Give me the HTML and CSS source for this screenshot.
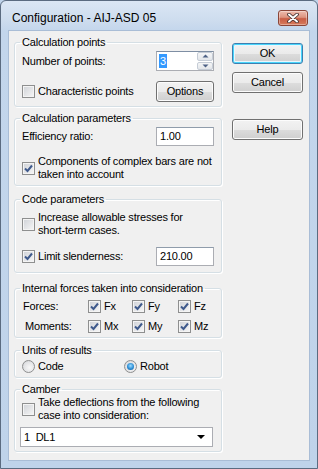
FILE: index.html
```html
<!DOCTYPE html>
<html>
<head>
<meta charset="utf-8">
<link rel="stylesheet" href="styles.css">
</head>
<body>
<div class="window">
  <div class="titlebar">
    <span class="title">Configuration - AIJ-ASD 05</span>
    <div class="close">
      <svg width="14" height="10" viewBox="0 0 14 10"><path d="M3 1.5 L11 8.5 M11 1.5 L3 8.5" stroke="#3b2a2a" stroke-width="3.6" stroke-linecap="round"/><path d="M3 1.5 L11 8.5 M11 1.5 L3 8.5" stroke="#fff" stroke-width="2" stroke-linecap="round"/></svg>
    </div>
  </div>
  <div class="client">
    <div class="left">
      <fieldset class="grp g1">
        <legend>Calculation points</legend>
        <div class="row r20">
          <span class="lbl">Number of points:</span>
          <div class="spin">
            <span class="spin-val"><span class="sel">3</span></span>
            <div class="spin-btns">
              <div class="sb"><svg width="7" height="4" viewBox="0 0 7 4"><path d="M0.5 3.5 L3.5 0.5 L6.5 3.5Z" fill="#4d6185"/></svg></div>
              <div class="sb"><svg width="7" height="4" viewBox="0 0 7 4"><path d="M0.5 0.5 L3.5 3.5 L6.5 0.5Z" fill="#4d6185"/></svg></div>
            </div>
          </div>
        </div>
        <div class="row r21 mt10">
          <span class="cb"></span><span class="cbl">Characteristic points</span>
          <button class="btn opt">Options</button>
        </div>
      </fieldset>

      <fieldset class="grp g2">
        <legend>Calculation parameters</legend>
        <div class="row r19 mt2">
          <span class="lbl">Efficiency ratio:</span>
          <span class="edit">1.00</span>
        </div>
        <div class="row two mt9">
          <span class="cb on"><svg width="11" height="11" viewBox="0 0 11 11"><path d="M2 5.5 L4.5 8 L9 2.5" fill="none" stroke="#3f5a8c" stroke-width="2"/></svg></span>
          <span class="cbl">Components of complex bars are not<br>taken into account</span>
        </div>
      </fieldset>

      <fieldset class="grp g3">
        <legend>Code parameters</legend>
        <div class="row two mt5">
          <span class="cb"></span>
          <span class="cbl">Increase allowable stresses for<br>short-term cases.</span>
        </div>
        <div class="row r19 mt10">
          <span class="cb on"><svg width="11" height="11" viewBox="0 0 11 11"><path d="M2 5.5 L4.5 8 L9 2.5" fill="none" stroke="#3f5a8c" stroke-width="2"/></svg></span>
          <span class="cbl">Limit slenderness:</span>
          <span class="edit">210.00</span>
        </div>
      </fieldset>

      <fieldset class="grp g4">
        <legend>Internal forces taken into consideration</legend>
        <div class="forces mt5">
          <span class="flbl">Forces:</span>
          <span class="fc"><span class="cb on"><svg width="11" height="11" viewBox="0 0 11 11"><path d="M2 5.5 L4.5 8 L9 2.5" fill="none" stroke="#3f5a8c" stroke-width="2"/></svg></span><span class="cbl">Fx</span></span>
          <span class="fc"><span class="cb on"><svg width="11" height="11" viewBox="0 0 11 11"><path d="M2 5.5 L4.5 8 L9 2.5" fill="none" stroke="#3f5a8c" stroke-width="2"/></svg></span><span class="cbl">Fy</span></span>
          <span class="fc"><span class="cb on"><svg width="11" height="11" viewBox="0 0 11 11"><path d="M2 5.5 L4.5 8 L9 2.5" fill="none" stroke="#3f5a8c" stroke-width="2"/></svg></span><span class="cbl">Fz</span></span>
        </div>
        <div class="forces mt7">
          <span class="flbl mlbl">Moments:</span>
          <span class="fc"><span class="cb on"><svg width="11" height="11" viewBox="0 0 11 11"><path d="M2 5.5 L4.5 8 L9 2.5" fill="none" stroke="#3f5a8c" stroke-width="2"/></svg></span><span class="cbl">Mx</span></span>
          <span class="fc"><span class="cb on"><svg width="11" height="11" viewBox="0 0 11 11"><path d="M2 5.5 L4.5 8 L9 2.5" fill="none" stroke="#3f5a8c" stroke-width="2"/></svg></span><span class="cbl">My</span></span>
          <span class="fc"><span class="cb on"><svg width="11" height="11" viewBox="0 0 11 11"><path d="M2 5.5 L4.5 8 L9 2.5" fill="none" stroke="#3f5a8c" stroke-width="2"/></svg></span><span class="cbl">Mz</span></span>
        </div>
      </fieldset>

      <fieldset class="grp g5">
        <legend>Units of results</legend>
        <div class="row r13 mt3">
          <span class="radio"></span><span class="cbl rl1">Code</span>
          <span class="radio on"><span class="dot"></span></span><span class="cbl">Robot</span>
        </div>
      </fieldset>

      <fieldset class="grp g6">
        <legend>Camber</legend>
        <div class="row two">
          <span class="cb"></span>
          <span class="cbl">Take deflections from the following<br>case into consideration:</span>
        </div>
        <div class="combo mt5">
          <span class="combo-val">1&nbsp; DL1</span>
          <svg width="8" height="4" viewBox="0 0 8 4"><path d="M0 0 L8 0 L4 4Z" fill="#000"/></svg>
        </div>
      </fieldset>
    </div>
    <div class="right">
      <button class="btn side def">OK</button>
      <button class="btn side cancel">Cancel</button>
      <button class="btn side help">Help</button>
    </div>
  </div>
</div>
</body>
</html>
```
FILE: styles.css
```css
html, body {
  margin: 0;
  padding: 0;
  background: #bfd3ea;
}
body {
  width: 318px;
  height: 469px;
  overflow: hidden;
  font-family: "Liberation Sans", Arial, sans-serif;
  font-size: 11px;
  color: #000;
}
.window {
  width: 318px;
  height: 469px;
  box-sizing: border-box;
  border: 1px solid #5b6b80;
  border-radius: 6px 6px 0 0;
  background: linear-gradient(#dbe6f4 0px, #cddcee 20px, #c3d6ec 30px, #bfd3ea 100%);
  display: flex;
  flex-direction: column;
}
.titlebar {
  height: 29px;
  display: flex;
  align-items: flex-start;
  flex: none;
}
.title {
  font-size: 12px;
  line-height: 15px;
  margin-top: 10px;
  margin-left: 11px;
  color: #000;
}
.close {
  margin-left: auto;
  margin-right: 9px;
  margin-top: 9px;
  width: 30px;
  height: 16px;
  box-sizing: border-box;
  border: 1px solid #8a4538;
  border-radius: 3px;
  background: linear-gradient(#eebcae 0%, #dd9480 45%, #c85d45 55%, #d77b5c 100%);
  box-shadow: inset 0 0 0 1px rgba(255,255,255,0.35);
  display: flex;
  align-items: center;
  justify-content: center;
}
.client {
  margin: 0 7px;
  height: 431px;
  box-sizing: border-box;
  background: #f0f0f0;
  border: 1px solid #a9bdd6;
  display: flex;
  padding: 5px 0 0 5px;
  letter-spacing: -0.2px;
}
.left {
  width: 208px;
  display: flex;
  flex-direction: column;
}
.right {
  margin-left: 10px;
  width: 71px;
  display: flex;
  flex-direction: column;
  padding-top: 7px;
}
.grp {
  margin: 0;
  padding: 0 7px 0 7px;
  border: 1px solid #d5dfe5;
  border-radius: 3px;
  box-shadow: inset 1px 1px 0 #fff, 1px 1px 0 #fff;
  min-width: 0;
}
.grp legend {
  padding: 0 2px;
  margin-left: -2px;
  line-height: 13px;
  font-size: 11px;
}
.g1 { padding-bottom: 4px; }
.g2 { margin-top: 5px; padding-bottom: 4px; }
.g3 { margin-top: 7px; padding-bottom: 6px; }
.g4 { margin-top: 9px; padding-bottom: 4px; }
.g5 { margin-top: 6px; padding-bottom: 4px; }
.g6 { margin-top: 5px; padding-bottom: 4px; }

.g1 .row.r20 { margin-top: 2px; }
.mt2 { margin-top: 2px; }
.mt3 { margin-top: 3px; }
.mt5 { margin-top: 5px; }
.mt7 { margin-top: 7px; }
.mt9 { margin-top: 9px; }
.mt10 { margin-top: 10px; }

.row {
  display: flex;
  align-items: center;
}
.r20 { height: 20px; }
.r21 { height: 21px; }
.r19 { height: 19px; }
.r13 { height: 13px; }
.two { min-height: 26px; }
.two .cbl { line-height: 13px; }
.lbl {
  line-height: 13px;
}
.cbl {
  margin-left: 3px;
  line-height: 13px;
  white-space: nowrap;
}
.cb {
  flex: none;
  width: 13px;
  height: 13px;
  box-sizing: border-box;
  border: 1px solid #8e8f8f;
  background: linear-gradient(135deg, #cfd2d7 0%, #e7e8ea 60%, #f7f7f7 100%);
  box-shadow: inset 0 0 0 1px #f4f4f4;
  display: flex;
  align-items: center;
  justify-content: center;
}
.cb svg { display: block; }
.spin {
  margin-left: auto;
  width: 58px;
  height: 20px;
  box-sizing: border-box;
  border: 1px solid #abadb3;
  border-top-color: #7e8ea3;
  background: #fff;
  display: flex;
  align-items: center;
}
.spin-val {
  flex: 1;
  padding-left: 2px;
  line-height: 13px;
}
.sel {
  background: #3399ff;
  color: #fff;
  padding: 1px 1px;
}
.spin-btns {
  width: 16px;
  height: 18px;
  display: flex;
  flex-direction: column;
  gap: 1px;
}
.sb {
  flex: 1;
  box-sizing: border-box;
  border: 1px solid #c5ccd6;
  border-radius: 2px;
  background: linear-gradient(#f5f6f7, #e3e6ea);
  display: flex;
  align-items: center;
  justify-content: center;
}
.sb svg { display: block; }
.edit {
  margin-left: auto;
  width: 58px;
  height: 19px;
  box-sizing: border-box;
  border: 1px solid #abadb3;
  border-top-color: #8f9cab;
  background: #fff;
  padding-left: 3px;
  line-height: 17px;
}
.btn {
  font-family: "Liberation Sans", Arial, sans-serif;
  font-size: 11px;
  letter-spacing: -0.2px;
  color: #000;
  height: 21px;
  box-sizing: border-box;
  border: 1px solid #707070;
  border-radius: 3px;
  background: linear-gradient(#f2f2f2 0%, #ebebeb 50%, #dddddd 51%, #cfcfcf 100%);
  box-shadow: inset 0 0 0 1px #fcfcfc;
  padding: 0;
  line-height: 17px;
}
.opt {
  margin-left: auto;
  width: 58px;
}
.side { width: 71px; }
.def {
  border-color: #3c7fb1;
  box-shadow: inset 0 0 0 1px #48d5fb, inset 0 0 0 2px #e8f6fd;
}
.cancel { margin-top: 8px; }
.help { margin-top: 26px; }

.forces {
  display: grid;
  grid-template-columns: 66px 44px 46px auto;
  align-items: center;
  height: 13px;
}
.flbl { line-height: 13px; padding-left: 1px; }
.mlbl { padding-left: 3px; }
.fc { display: flex; align-items: center; }

.radio {
  flex: none;
  width: 13px;
  height: 13px;
  box-sizing: border-box;
  border: 1px solid #8e8f8f;
  border-radius: 50%;
  background: radial-gradient(circle at 60% 60%, #f8f8f8 0%, #e2e3e5 60%, #c9cbcf 100%);
  display: flex;
  align-items: center;
  justify-content: center;
}
.dot {
  width: 7px;
  height: 7px;
  border-radius: 50%;
  background: radial-gradient(circle at 50% 40%, #9fdcff 0%, #2d8fd6 55%, #0e4f8d 100%);
}
.rl1 { width: 86px; }

.combo {
  margin-left: -2px;
  width: 193px;
  height: 20px;
  box-sizing: border-box;
  border: 1px solid #abadb3;
  background: #fff;
  display: flex;
  align-items: center;
  padding: 0 7px 0 3px;
}
.combo-val { flex: 1; line-height: 13px; }
.combo svg { display: block; }
```
